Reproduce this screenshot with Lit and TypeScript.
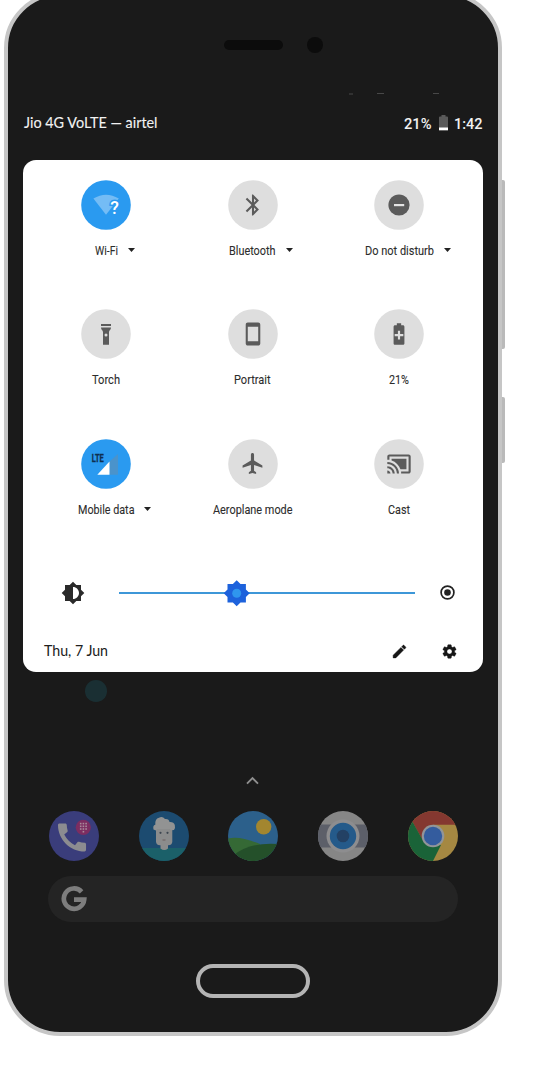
import { LitElement, html, svg, css, nothing } from "lit";
import { customElement, property } from "lit/decorators.js";

/** A run of text drawn to an exact width, for condensed lettering. */
@customElement("fit-text")
class FitText extends LitElement {
  @property() text = "";
  @property({ type: Number }) w = 20;
  @property({ type: Number }) size = 13;
  static styles = css`
    :host { display: block; line-height: 0; }
    svg { display: block; overflow: visible; }
    text { fill: currentColor; stroke: currentColor; stroke-width: var(--heft, 0); }
  `;
  render() {
    return html`<svg width=${this.w} height="18" viewBox="0 0 ${this.w} 18">
      <text x="0" y="14" font-size=${this.size} textLength=${this.w} lengthAdjust="spacingAndGlyphs">${this.text}</text>
    </svg>`;
  }
}

const grey = "#5b5b5b";
const glyph = (d: string, s: number, dy = 0) =>
  svg`<path fill=${grey} transform="translate(${25 - s / 2} ${25 - s / 2 + dy}) scale(${s / 24})" d=${d}/>`;

const tiles = [
  { label: "Wi-Fi", w: 23, on: true, arrow: true, art: svg`
    <path d="M12.4 18.6Q25 10.8 37.8 18.6L25 34.7Z" fill="#74bcf5"/>
    <text x="29.3" y="34" font-size="17.5" font-weight="500" fill="#fff" stroke="#2a9af0" stroke-width="3" paint-order="stroke" textLength="8.6" lengthAdjust="spacingAndGlyphs">?</text>` },
  { label: "Bluetooth", w: 46.5, arrow: true, art: glyph("M17.71 7.71L12 2h-1v7.59L6.41 5 5 6.41 10.59 12 5 17.59 6.41 19 11 14.41V22h1l5.71-5.71-4.3-4.29 4.3-4.29zM13 5.83l1.88 1.88L13 9.59V5.83zm1.88 10.46L13 18.17v-3.76l1.88 1.88z", 25) },
  { label: "Do not disturb", w: 69, arrow: true, art: svg`<circle cx="25" cy="25" r="10.6" fill=${grey}/><rect x="20" y="24" width="10.2" height="2.2" fill="#e4e4e4"/>` },
  { label: "Torch", w: 28, art: svg`<path fill=${grey} d="M20 15h10v2H20zM20 18.6h10c0 2.4-1.8 2.6-2 4.4V35.7h-6V23c-.2-1.8-2-2-2-4.4z"/><circle cx="25" cy="26" r="1.5" fill="#ddd"/>` },
  { label: "Portrait", w: 36.5, art: glyph("M17 1.01L7 1c-1.1 0-1.99.9-1.99 2v18c0 1.1.89 2 1.99 2h10c1.1 0 2-.9 2-2V3c0-1.1-.9-1.99-2-1.99zM17 19H7V5h10v14z", 25) },
  { label: "21%", w: 20, art: glyph("M15.67 4H14V2h-4v2H8.33C7.6 4 7 4.6 7 5.33v15.33C7 21.4 7.6 22 8.33 22h7.33c.74 0 1.34-.6 1.34-1.33V5.33C17 4.6 16.4 4 15.67 4zM16 14h-3v3h-2v-3H8v-2h3V9h2v3h3z", 26) },
  { label: "Mobile data", w: 56.5, on: true, arrow: true, art: svg`
    <text x="10.7" y="22.8" font-size="10" font-weight="700" fill="#0e2f50" stroke="#0e2f50" stroke-width=".3" textLength="12" lengthAdjust="spacingAndGlyphs">LTE</text>
    <path d="M28.5 22.5L37 15V35.7H28.5Z" fill="#4a93cb"/><path d="M16.3 35.7L28.5 22.5V35.7Z" fill="#fff"/>` },
  { label: "Aeroplane mode", w: 79.5, art: glyph("M21 16v-2l-8-5V3.5c0-.83-.67-1.5-1.5-1.5S10 2.67 10 3.5V9l-8 5v2l8-2.5V19l-2 1.5V22l3.5-1 3.5 1v-1.5L13 19v-5.5l8 2.5z", 25, -0.5) },
  { label: "Cast", w: 22, art: glyph("M1 18v3h3c0-1.66-1.34-3-3-3zm0-4v2c2.76 0 5 2.24 5 5h2c0-3.87-3.13-7-7-7zm18-7H5v1.63c3.96 1.28 7.09 4.41 8.37 8.37H19V7zM1 10v2c4.97 0 9 4.03 9 9h2c0-6.08-4.93-11-11-11zm20-7H3c-1.1 0-2 .9-2 2v3h2V5h18v14h-7v2h7c1.1 0 2-.9 2-2V5c0-1.1-.9-2-2-2z", 25.5) },
];

const SUN = "M20 15.31L23.31 12 20 8.69V4h-4.69L12 .69 8.69 4H4v4.69L.69 12 4 15.31V20h4.69L12 23.31 15.31 20H20v-4.69z";
const GEAR = "M19.14 12.94c.04-.3.06-.61.06-.94 0-.32-.02-.64-.07-.94l2.03-1.58c.18-.14.23-.41.12-.61l-1.92-3.32c-.12-.22-.37-.29-.59-.22l-2.39.96c-.5-.38-1.03-.7-1.62-.94l-.36-2.54c-.04-.24-.24-.41-.48-.41h-3.84c-.24 0-.43.17-.47.41l-.36 2.54c-.59.24-1.13.57-1.62.94l-2.39-.96c-.22-.08-.47 0-.59.22L2.74 8.87c-.12.21-.08.47.12.61l2.03 1.58c-.05.3-.09.63-.09.94s.02.64.07.94l-2.03 1.58c-.18.14-.23.41-.12.61l1.92 3.32c.12.22.37.29.59.22l2.39-.96c.5.38 1.03.7 1.62.94l.36 2.54c.05.24.24.41.48.41h3.84c.24 0 .44-.17.47-.41l.36-2.54c.59-.24 1.13-.56 1.62-.94l2.39.96c.22.08.47 0 .59-.22l1.92-3.32c.12-.22.07-.47-.12-.61l-2.01-1.58zM12 15.6c-1.98 0-3.6-1.62-3.6-3.6s1.62-3.6 3.6-3.6 3.6 1.62 3.6 3.6-1.62 3.6-3.6 3.6z";
const PENCIL = "M3 17.25V21h3.75L17.81 9.94l-3.75-3.75L3 17.25zM20.71 7.04c.39-.39.39-1.02 0-1.41l-2.34-2.34c-.39-.39-1.02-.39-1.41 0l-1.83 1.83 3.75 3.75 1.83-1.83z";
const CALL = "M20.01 15.38c-1.23 0-2.42-.2-3.53-.56-.35-.12-.74-.03-1.01.24l-1.57 1.97c-2.83-1.35-5.48-3.9-6.89-6.83l1.95-1.66c.27-.28.35-.67.24-1.02-.37-1.11-.56-2.3-.56-3.53 0-.54-.45-.99-.99-.99H4.19C3.65 3 3 3.24 3 3.99 3 13.28 10.73 21 20.01 21c.71 0 .99-.63.99-1.18v-3.45c0-.54-.45-.99-.99-.99z";

const dots = [];
for (let r = 0; r < 4; r++)
  for (let c = 0; c < 3; c++)
    if (r < 3 || c === 1) dots.push(svg`<rect x=${30.9 + c * 2.7} y=${11.8 + r * 2.7} width="1.6" height="1.6" fill="#a98b9c"/>`);

const apps = [
  svg`<circle cx="25" cy="25" r="25" fill="#3a3d7b"/>
    <path transform="translate(4.3 7.7) scale(1.56)" fill="#8c8c90" d=${CALL}/>
    <circle cx="34.3" cy="16.3" r="7.6" fill="#7c2d61"/>${dots}`,
  svg`<clipPath id="c"><circle cx="25" cy="25" r="25"/></clipPath>
    <circle cx="25" cy="25" r="25" fill="#1c4b70"/>
    <rect y="37" width="50" height="13" fill="#1b6069" clip-path="url(#c)"/>
    <path fill="#8b8c8c" d="M21.5 33h7.5v4.5q-3.7 3-7.5 0z"/>
    <rect x="17" y="14" width="16.3" height="20.3" rx="4" fill="#8b8c8c"/>
    <path fill="#929393" d="M14.5 18.500q-1-4 1.800-4.800-.5-6 3.700-7 3.500-1.700 6 1.300 4-.5 4.500 3 4.300-.3 5.300 3 .8 3-.8 5l-3 .3-1.200-1.300H18l-1 1.500z"/>
    <circle cx="21.5" cy="21.8" r="1.1" fill="#3c4650"/><circle cx="28.5" cy="21.8" r="1.1" fill="#3c4650"/>
    <path d="M23.5 29h3" stroke="#6f5f5f" stroke-width="1"/>`,
  svg`<clipPath id="c"><circle cx="25" cy="25" r="25"/></clipPath><g clip-path="url(#c)">
    <rect width="50" height="50" fill="#2c608b"/><circle cx="35.7" cy="15.7" r="7.7" fill="#a3862f"/>
    <path d="M0 27.5Q12 24.5 32 33V50H0z" fill="#356935"/><path d="M6 44Q22 31 50 33V50H6z" fill="#24502a"/></g>`,
  svg`<clipPath id="c"><circle cx="25" cy="25" r="25"/></clipPath><g clip-path="url(#c)">
    <rect width="50" height="50" fill="#868686"/><rect y="13.5" width="50" height="23" fill="#5c5f69"/></g>
    <circle cx="25" cy="25" r="16.5" fill="#8d8d8f"/><circle cx="25" cy="25" r="13.2" fill="#245a8a"/><circle cx="25" cy="25" r="6.3" fill="#234164"/>`,
  svg`<clipPath id="c"><circle cx="25" cy="25" r="25"/></clipPath><g clip-path="url(#c)">
    <rect width="50" height="50" fill="#a58842"/>
    <path d="M0 0H50V13.7H25L14.5 29L4 10z" fill="#843830"/>
    <path d="M0 6L5.2 12L15.5 30.5L33 34L24.5 51H0z" fill="#1a6338"/></g>
    <circle cx="25" cy="25" r="11.3" fill="#929599"/><circle cx="25" cy="25" r="9.2" fill="#345c9e"/>`,
];

@customElement("app-root")
class AppRoot extends LitElement {
  static styles = css`
    :host { display: block; height: 1078px; overflow: hidden; background: #fff; font-family: Roboto, "Liberation Sans", sans-serif; }
    svg { display: block; flex: none; }
    .device { display: flex; margin-top: -8px; padding-left: 4px; }
    .phone { box-sizing: border-box; width: 498px; height: 1044px; flex: none; border: 4px solid #c6c6c6; border-radius: 56px; background: #1a1a1a; display: flex; flex-direction: column; }
    .keys { display: flex; flex-direction: column; gap: 48px; padding-top: 188px; }
    .key { width: 3px; height: 169px; background: #bababa; border-radius: 0 2px 2px 0; }
    .key.small { height: 66px; }
    .ear { height: 97px; flex: none; box-sizing: border-box; padding: 40.5px 0 0 215.5px; display: flex; gap: 24.5px; }
    .speaker { width: 59px; height: 10px; border-radius: 5px; background: #0c0c0c; margin-top: 3.3px; }
    .lens { width: 16px; height: 16.5px; border-radius: 50%; background: #0c0c0c; }
    .status { height: 64.5px; flex: none; box-sizing: border-box; padding: 19.7px 15.3px 0 15.7px; display: flex; justify-content: space-between; color: #f2f2f2; }
    .carrier, .date { font-family: Lato, "Open Sans", sans-serif; }
    .carrier { margin-top: -.7px; --heft: .1; }
    .right { display: flex; font-weight: 500; }
    .right svg { margin: .5px 6.5px 0 7px; }
    .card { width: 459.4px; height: 512px; flex: none; margin-left: 15.4px; box-sizing: border-box; border-radius: 13px; background: #fff; padding: 20px 9.8px 0; color: #2c2c2c; }
    .tiles { display: grid; grid-template-columns: repeat(3, 146.5px); grid-auto-rows: 129.5px; }
    .tile { display: flex; flex-direction: column; align-items: center; }
    .label { display: grid; grid-template-columns: 1fr auto 1fr; width: 100%; margin: 11px 0 0 -.7px; align-items: center; --heft: .1; }
    .label svg { margin-left: 10px; }
    .bright { display: flex; align-items: center; height: 28px; padding-left: 28.3px; margin-top: 10.5px; }
    .track { margin: 0 24.5px 0 33.7px; }
    .foot { display: flex; align-items: center; padding-left: 11.3px; margin-top: 34.5px; height: 20px; color: #202020; }
    .date { flex: 0 0 347px; }
    .gear { margin-left: 33px; }
    .home { padding-left: 40px; }
    .dot { width: 21.5px; height: 21.5px; border-radius: 50%; background: #1a2f33; margin: 8.5px 0 0 37px; }
    .chev { margin: 74px 0 0 197px; }
    .dock { display: flex; gap: 39.6px; margin: 25.5px 0 0 1.3px; }
    .search { box-sizing: border-box; width: 410px; height: 46px; border-radius: 23px; background: #242424; margin-top: 15px; padding: 10px 0 0 12.5px; }
    .button { box-sizing: border-box; width: 114px; height: 34px; border: 4px solid #b4b4b4; border-radius: 17px; margin: 42px auto 0; }
  `;
  render() {
    return html`<div class="device">
      <div class="phone">
        <div class="ear"><div class="speaker"></div><div class="lens"></div></div>
        <svg width="490" height="2" viewBox="0 0 490 2"><path d="M341 1h4M369 .5h7M425 .5h6" stroke="#484848" stroke-width="1"/></svg>
        <div class="status">
          <fit-text class="carrier" text="Jio 4G VoLTE — airtel" w="133.5" size="15"></fit-text>
          <div class="right">
            <fit-text text="21%" w="27.5" size="15"></fit-text>
            <svg width="9" height="16" viewBox="0 0 9 16"><path d="M2.5 0h4v1.5H8q1 0 1 1V15.3H0V2.5q0-1 1-1h1.5z" fill="#5a5a5a"/><path d="M0 12.5h9v2.8H0z" fill="#fff"/></svg>
            <fit-text text="1:42" w="28.5" size="15"></fit-text>
          </div>
        </div>
        <div class="card">
          <div class="tiles">${tiles.map((t) => html`<div class="tile">
            <svg width="50" height="50" viewBox="0 0 50 50"><circle cx="25" cy="25" r="24.8" fill=${t.on ? "#2a9af0" : "#dedede"}/>${t.art}</svg>
            <div class="label"><span></span><fit-text text=${t.label} w=${t.w} size="12.9"></fit-text>
              ${t.arrow ? html`<svg width="7" height="4" viewBox="0 0 7 4"><path d="M0 0h7L3.5 4z" fill="#222"/></svg>` : nothing}</div>
          </div>`)}</div>
          <div class="bright">
            <svg width="24" height="24" viewBox="0 0 24 24"><path fill="#2a2a2a" d="${SUN}M12 18V6c3.31 0 6 2.69 6 6s-2.69 6-6 6z" fill-rule="evenodd"/></svg>
            <svg class="track" width="296" height="28" viewBox="0 0 296 28"><path d="M0 14H296" stroke="#3d97d8" stroke-width="2"/>
              <path transform="translate(103.9 .4) scale(1.15)" fill="#1d62dc" d=${SUN}/><circle cx="117.7" cy="14.2" r="4.5" fill="#2f96ee"/></svg>
            <svg width="15" height="15" viewBox="0 0 15 15"><circle cx="7.5" cy="7.5" r="6.4" fill="none" stroke="#222" stroke-width="1.7"/><circle cx="7.5" cy="7.5" r="3.3" fill="#222"/></svg>
          </div>
          <div class="foot">
            <fit-text class="date" text="Thu, 7 Jun" w="64" size="15"></fit-text>
            <svg width="17" height="17" viewBox="0 0 24 24"><path fill="#161616" stroke="#161616" stroke-width=".6" d=${PENCIL}/></svg>
            <svg class="gear" width="17" height="17" viewBox="0 0 24 24"><path fill="#161616" stroke="#161616" stroke-width=".6" d=${GEAR}/></svg>
          </div>
        </div>
        <div class="home">
          <div class="dot"></div>
          <svg class="chev" width="15" height="10" viewBox="0 0 15 10"><path d="M2 7.7L7.5 2.2L13 7.7" fill="none" stroke="#8f8f8f" stroke-width="1.9"/></svg>
          <div class="dock">${apps.map((a) => html`<svg width="50" height="50" viewBox="0 0 50 50">${a}</svg>`)}</div>
          <div class="search"><svg width="26" height="26" viewBox="0 0 26 26"><path d="M20.6 5.8A10.2 10.2 0 1 0 23.2 13.6H13" fill="none" stroke="#7d7d7d" stroke-width="4.7"/></svg></div>
        </div>
        <div class="button"></div>
      </div>
      <div class="keys"><div class="key"></div><div class="key small"></div></div>
    </div>`;
  }
}
